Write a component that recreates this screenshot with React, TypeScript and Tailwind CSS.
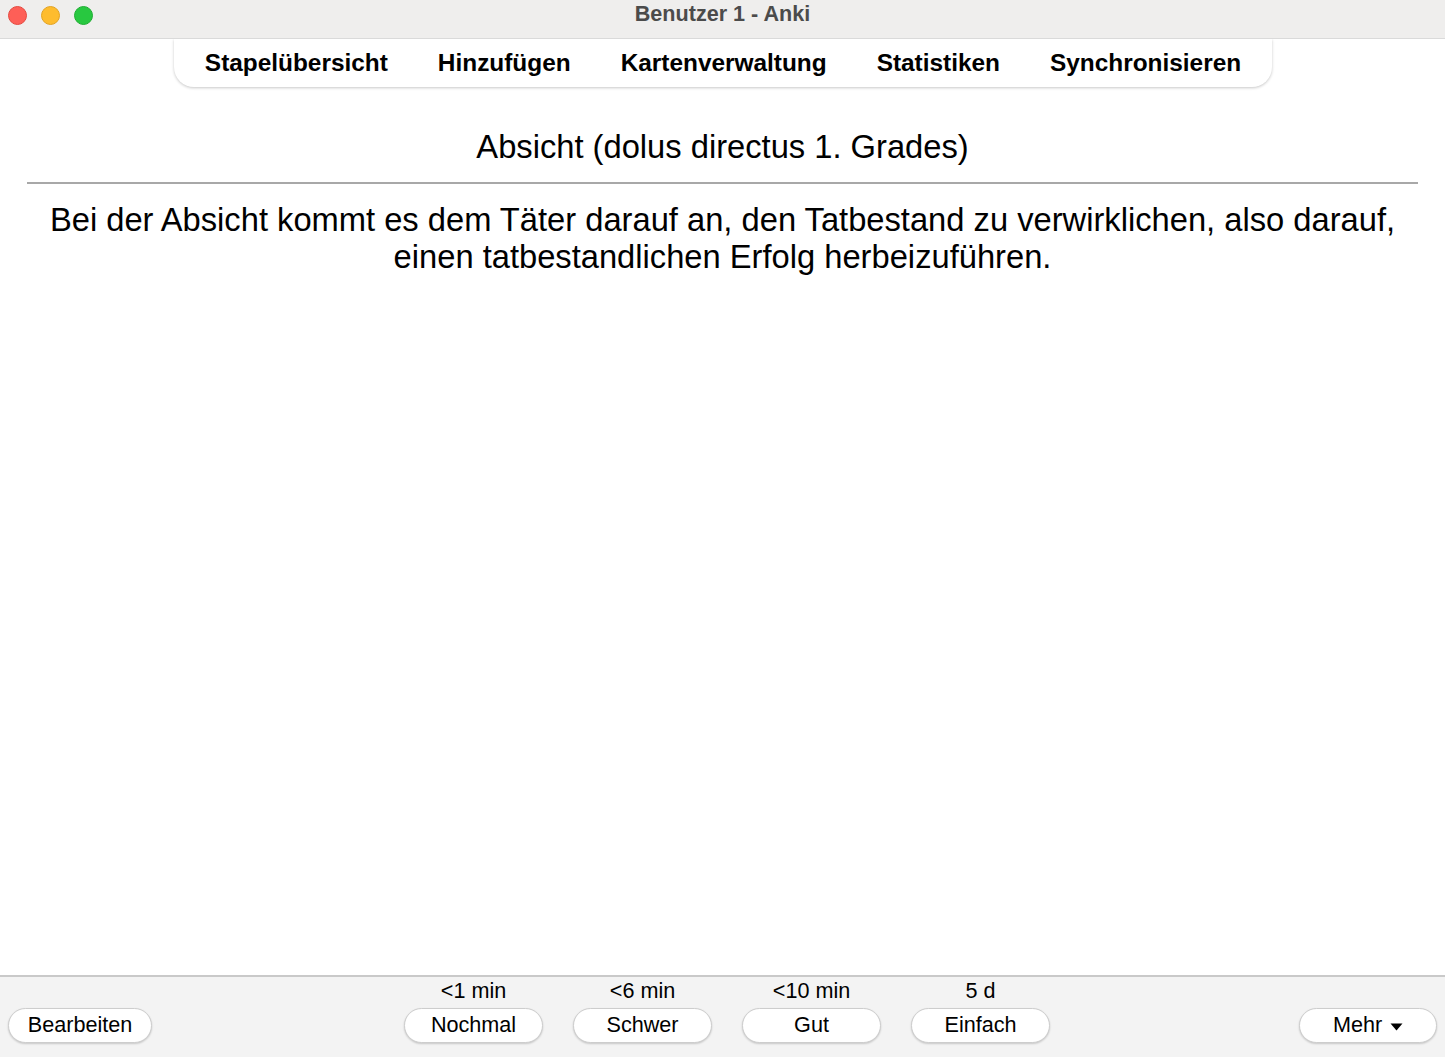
const navItems = ["Stapelübersicht", "Hinzufügen", "Kartenverwaltung", "Statistiken", "Synchronisieren"];

const answers = [
  { label: "Nochmal", due: "<1 min" },
  { label: "Schwer", due: "<6 min" },
  { label: "Gut", due: "<10 min" },
  { label: "Einfach", due: "5 d" },
];

const PillButton = ({ children, className = "" }: { children: React.ReactNode; className?: string }) => (
  <button
    className={
      "h-[35px] rounded-full border border-[#cdcdcd] bg-white text-[21.6px] text-black shadow-[0_1px_2px_rgba(0,0,0,0.18)] flex items-center justify-center " +
      className
    }
  >
    {children}
  </button>
);

export default function App() {
  return (
    <div className="h-screen flex flex-col bg-white [font-family:'Liberation_Sans',Arial,sans-serif] text-black overflow-hidden">
      {/* window title bar */}
      <div className="h-[39px] shrink-0 bg-[#efeeed] border-b border-[#dadada] relative flex justify-center pt-[1px]">
        <div className="absolute left-[8px] top-[6px] flex gap-[14px]">
          <span className="w-[19px] h-[19px] rounded-full bg-[#fe5f57] border border-[#e5493f]" />
          <span className="w-[19px] h-[19px] rounded-full bg-[#febc2e] border border-[#e2a323]" />
          <span className="w-[19px] h-[19px] rounded-full bg-[#28c840] border border-[#1fae33]" />
        </div>
        <span className="text-[21.6px] leading-[26px] font-bold text-[#4b4b4b]">Benutzer 1 - Anki</span>
      </div>

      {/* top toolbar */}
      <div className="shrink-0 flex justify-center">
        <nav className="ml-[1px] h-[48px] flex items-center gap-[50px] px-[31px] bg-white rounded-b-[20px] shadow-[0_1px_3px_rgba(0,0,0,0.22)]">
          {navItems.map((item) => (
            <span key={item} className="text-[24.4px] font-bold leading-none">
              {item}
            </span>
          ))}
        </nav>
      </div>

      {/* card */}
      <main className="flex-1 px-[27px]">
        <h1 className="mt-[42px] text-center text-[32.7px] leading-[36px]">Absicht (dolus directus 1. Grades)</h1>
        <hr className="mt-[17px] border-0 border-t-2 border-[#a8a8a8]" />
        <p className="mt-[17px] text-center text-[32.7px] leading-[37px]">
          Bei der Absicht kommt es dem Täter darauf an, den Tatbestand zu verwirklichen, also darauf, einen tatbestandlichen Erfolg herbeizuführen.
        </p>
      </main>

      {/* answer bar */}
      <div className="h-[82px] shrink-0 bg-[#f3f3f3] border-t-2 border-[#c9c9c9] grid grid-cols-[1fr_auto_1fr] items-end pb-[14px] px-[8px]">
        <div className="flex">
          <PillButton className="w-[144px]">Bearbeiten</PillButton>
        </div>
        <div className="flex ml-[9px]">
          {answers.map((a) => (
            <div key={a.label} className="w-[169px] flex flex-col items-center">
              <span className="text-[21.6px] leading-[24px] mb-[5px]">{a.due}</span>
              <PillButton className="w-[139px]">{a.label}</PillButton>
            </div>
          ))}
        </div>
        <div className="flex justify-end">
          <PillButton className="w-[138px] gap-[8px]">
            <span>Mehr</span>
            <svg width="13" height="8" viewBox="0 0 13 8" className="mt-[3px]">
              <path d="M0.5 0.5 L12.5 0.5 L6.5 7.5 Z" fill="#000" />
            </svg>
          </PillButton>
        </div>
      </div>
    </div>
  );
}
